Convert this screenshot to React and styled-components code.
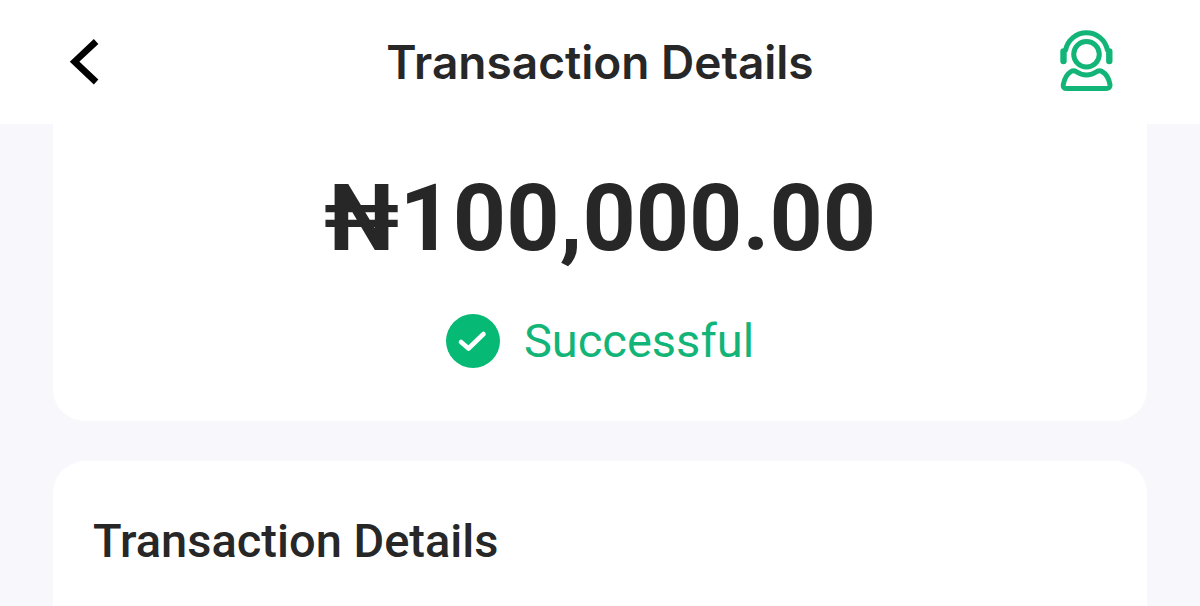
import React from 'react'
import styled, { createGlobalStyle } from 'styled-components'

const App = () => {
    return (<>
        <GlobalStyle />
        <Page>
            <Header>
                <IconButton type="button" aria-label="Back">
                    <HeaderIcon viewBox="0 0 60 64" stroke="#000000" strokeWidth="6.6">
                        <path d="M40.1 11.5 L18.6 31.7 L40.1 52" />
                    </HeaderIcon>
                </IconButton>
                <Title>Transaction Details</Title>
                <IconButton type="button" aria-label="Support">
                    <HeaderIcon viewBox="0 0 60 64" stroke="#12b577" strokeWidth="5" strokeLinecap="round" strokeLinejoin="round">
                        <path d="M9.6 20 A21.3 21.3 0 0 1 51.4 20" />
                        <path d="M7.5 21.5 V31 M53.3 21.5 V31" strokeWidth="6.4" />
                        <circle cx="30.5" cy="24.3" r="12.8" />
                        <path d="M20 41.5 Q30.5 48.5 41 41.5 Q43.5 40 46 41.5 C50.5 44 53 49 54 54.5 Q54.5 58.6 50 58.6 H11 Q6.5 58.6 7.3 54.5 C8.3 49 11 44 15 41.5 Q17.5 40 20 41.5 Z" />
                    </HeaderIcon>
                </IconButton>
            </Header>
            <Content>
                <SummaryCard>
                    <Amount>₦100,000.00</Amount>
                    <Status>
                        <StatusIcon viewBox="0 0 54 54">
                            <circle cx="27" cy="27" r="27" fill="#06b974" />
                            <path d="M15 28 L22.5 34.5 L37.5 20" fill="none" stroke="#ffffff" strokeWidth="4.6" strokeLinecap="round" strokeLinejoin="round" />
                        </StatusIcon>
                        Successful
                    </Status>
                </SummaryCard>
                <DetailsCard>
                    <SectionTitle>Transaction Details</SectionTitle>
                </DetailsCard>
            </Content>
        </Page>
    </>);
}

const GlobalStyle = createGlobalStyle`
    * {
        box-sizing : border-box;
    }
    body {
        margin : 0;
        background-color : #f7f7fc;
        color : #272727;
        font-family : Roboto, sans-serif;
    }
`;

const Page = styled.div`
    display : flex;
    flex-direction : column;
    min-height : 100vh;
`;

const Header = styled.header`
    display : flex;
    align-items : center;
    justify-content : space-between;
    height : 124px;
    padding : 0 56px;
    background-color : #ffffff;
`;

const IconButton = styled.button`
    display : flex;
    align-items : center;
    width : 88px;
    height : 64px;
    padding : 0;
    border : none;
    background : none;
    cursor : pointer;
`;

const HeaderIcon = styled.svg`
    width : 60px;
    height : 64px;
    fill : none;
`;

const Title = styled.h1`
    margin : 0;
    font-family : Inter, sans-serif;
    font-size : 46px;
    font-weight : 600;
    line-height : 56px;
`;

const Content = styled.main`
    display : flex;
    flex : 1;
    flex-direction : column;
    gap : 40px;
    padding : 0 53px;
`;

const SummaryCard = styled.section`
    display : flex;
    flex-direction : column;
    align-items : center;
    gap : 40px;
    padding : 40px 40px 53px;
    border-radius : 0 0 32px 32px;
    background-color : #ffffff;
`;

const Amount = styled.p`
    margin : 0;
    font-size : 93px;
    font-weight : 700;
    line-height : 110px;
`;

const Status = styled.div`
    display : flex;
    align-items : center;
    gap : 24px;
    color : #12b577;
    font-size : 47px;
    line-height : 54px;
`;

const StatusIcon = styled.svg`
    width : 54px;
    height : 54px;
`;

const DetailsCard = styled.section`
    flex : 1;
    padding : 52px 40px 36px;
    border-radius : 32px 32px 0 0;
    background-color : #ffffff;
`;

const SectionTitle = styled.h2`
    margin : 0;
    font-size : 47px;
    font-weight : 500;
    line-height : 56px;
`;

export default App;
